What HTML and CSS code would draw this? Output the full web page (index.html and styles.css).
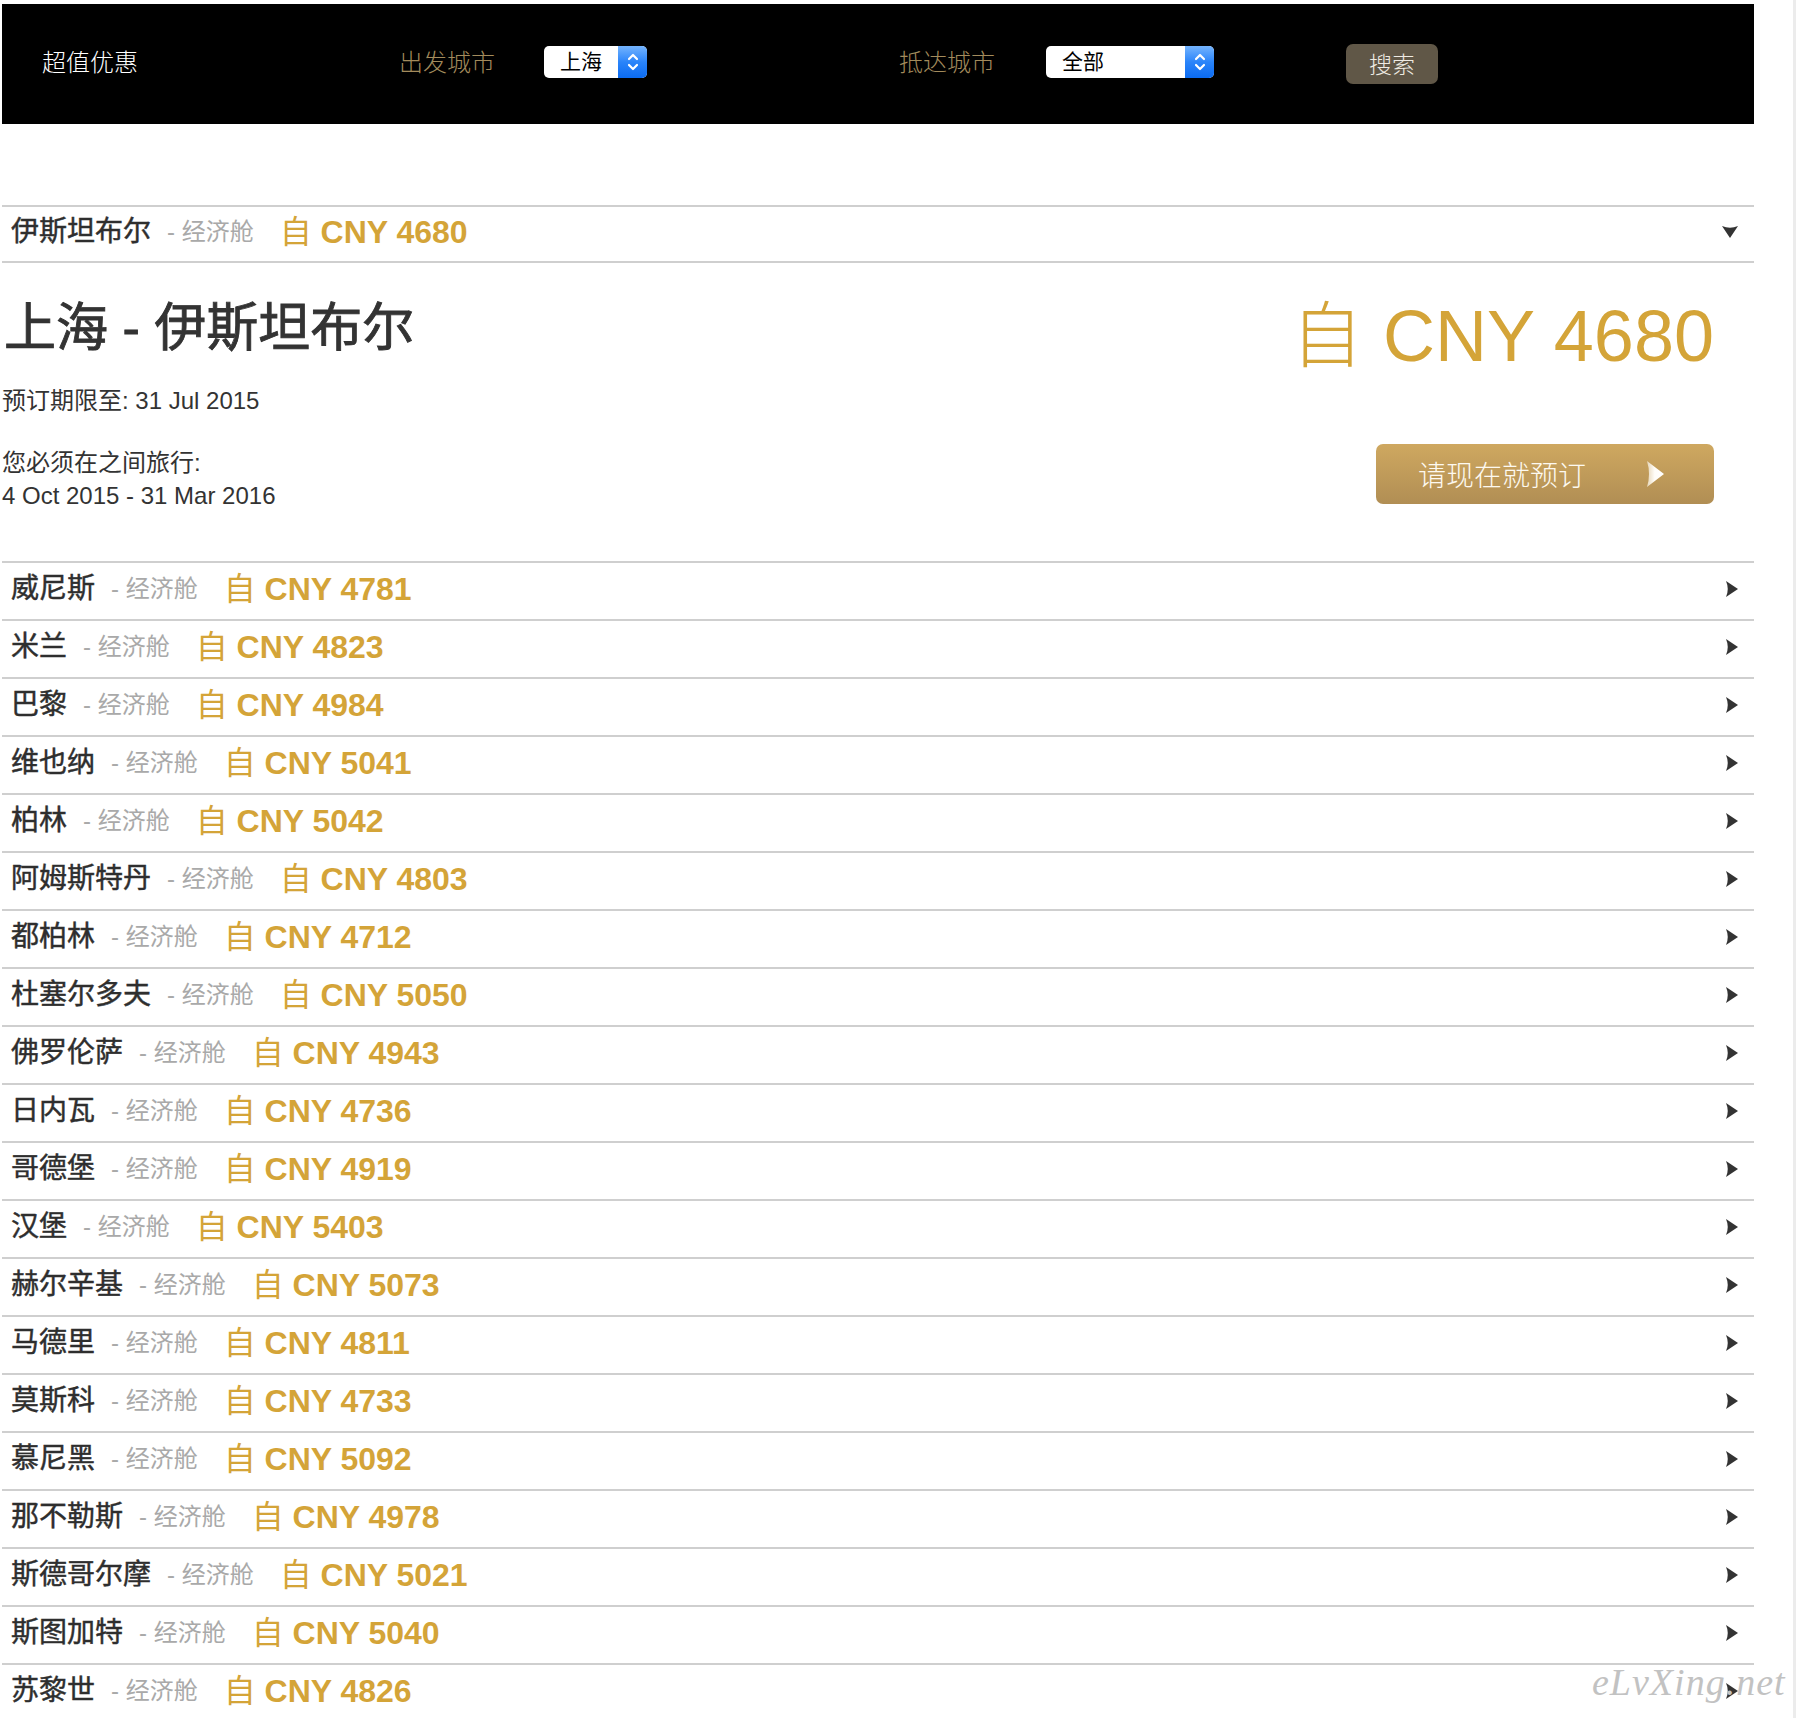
FILE: index.html
```html
<!DOCTYPE html>
<html lang="zh-CN">
<head>
    <meta charset="UTF-8">
    <meta name="viewport" content="width=device-width, initial-scale=1.0">
    <title>超值优惠</title>
    <link rel="stylesheet" href="styles.css">
</head>
<body>
    <div class="page">
        <!-- Pasek wyszukiwania -->
        <header class="topbar">
            <div class="brand">超值优惠</div>
            <div class="field-label">出发城市</div>
            <div class="field">
                <div class="select select-from">
                    <span class="select-value">上海</span>
                    <span class="stepper">
                        <svg width="12" height="20" viewBox="0 0 12 20"><path d="M2 7 L6 3 L10 7 M2 13 L6 17 L10 13" fill="none" stroke="#fff" stroke-width="2.2" stroke-linecap="round" stroke-linejoin="round"/></svg>
                    </span>
                </div>
            </div>
            <div class="field-label">抵达城市</div>
            <div class="field">
                <div class="select select-to">
                    <span class="select-value">全部</span>
                    <span class="stepper">
                        <svg width="12" height="20" viewBox="0 0 12 20"><path d="M2 7 L6 3 L10 7 M2 13 L6 17 L10 13" fill="none" stroke="#fff" stroke-width="2.2" stroke-linecap="round" stroke-linejoin="round"/></svg>
                    </span>
                </div>
            </div>
            <div class="field">
                <button class="search-btn">搜索</button>
            </div>
        </header>

        <section class="deals">
            <div class="deal-row deal-row-open">
                <span class="deal-city">伊斯坦布尔</span>
                <span class="deal-cabin">- 经济舱</span>
                <span class="deal-price"><span class="from">自</span> CNY 4680</span>
                <svg class="deal-arrow" width="16" height="12" viewBox="0 0 16 12"><path d="M0 0 Q8 3.5 16 0 L8 12 Z" fill="#333"/></svg>
            </div>

            <div class="deal-detail">
                <div class="detail-main">
                    <h1 class="route-title">上海 - 伊斯坦布尔</h1>
                    <p class="book-by">预订期限至: 31 Jul 2015</p>
                    <p class="travel-window">您必须在之间旅行:<br>4 Oct 2015 - 31 Mar 2016</p>
                </div>
                <div class="detail-side">
                    <div class="detail-price"><span class="from">自</span> CNY 4680</div>
                    <a href="#" class="book-btn">
                        <span>请现在就预订</span>
                        <svg width="18" height="26" viewBox="0 0 18 26">
                            <defs>
                                <linearGradient id="arrowShade" x1="0" y1="0" x2="1" y2="0">
                                    <stop offset="0" stop-color="#e6d6b8"/>
                                    <stop offset="0.45" stop-color="#fffdf8"/>
                                    <stop offset="1" stop-color="#ffffff"/>
                                </linearGradient>
                            </defs>
                            <path d="M1 0 L18 13 L1 26 Q5 13 1 0 Z" fill="url(#arrowShade)"/>
                        </svg>
                    </a>
                </div>
            </div>

            <div class="deal-row"><span class="deal-city">威尼斯</span><span class="deal-cabin">- 经济舱</span><span class="deal-price"><span class="from">自</span> CNY 4781</span><svg class="deal-arrow" width="12" height="16" viewBox="0 0 12 16"><path d="M0 0 L12 8 L0 16 Q3.5 8 0 0 Z" fill="#333"/></svg></div>
            <div class="deal-row"><span class="deal-city">米兰</span><span class="deal-cabin">- 经济舱</span><span class="deal-price"><span class="from">自</span> CNY 4823</span><svg class="deal-arrow" width="12" height="16" viewBox="0 0 12 16"><path d="M0 0 L12 8 L0 16 Q3.5 8 0 0 Z" fill="#333"/></svg></div>
            <div class="deal-row"><span class="deal-city">巴黎</span><span class="deal-cabin">- 经济舱</span><span class="deal-price"><span class="from">自</span> CNY 4984</span><svg class="deal-arrow" width="12" height="16" viewBox="0 0 12 16"><path d="M0 0 L12 8 L0 16 Q3.5 8 0 0 Z" fill="#333"/></svg></div>
            <div class="deal-row"><span class="deal-city">维也纳</span><span class="deal-cabin">- 经济舱</span><span class="deal-price"><span class="from">自</span> CNY 5041</span><svg class="deal-arrow" width="12" height="16" viewBox="0 0 12 16"><path d="M0 0 L12 8 L0 16 Q3.5 8 0 0 Z" fill="#333"/></svg></div>
            <div class="deal-row"><span class="deal-city">柏林</span><span class="deal-cabin">- 经济舱</span><span class="deal-price"><span class="from">自</span> CNY 5042</span><svg class="deal-arrow" width="12" height="16" viewBox="0 0 12 16"><path d="M0 0 L12 8 L0 16 Q3.5 8 0 0 Z" fill="#333"/></svg></div>
            <div class="deal-row"><span class="deal-city">阿姆斯特丹</span><span class="deal-cabin">- 经济舱</span><span class="deal-price"><span class="from">自</span> CNY 4803</span><svg class="deal-arrow" width="12" height="16" viewBox="0 0 12 16"><path d="M0 0 L12 8 L0 16 Q3.5 8 0 0 Z" fill="#333"/></svg></div>
            <div class="deal-row"><span class="deal-city">都柏林</span><span class="deal-cabin">- 经济舱</span><span class="deal-price"><span class="from">自</span> CNY 4712</span><svg class="deal-arrow" width="12" height="16" viewBox="0 0 12 16"><path d="M0 0 L12 8 L0 16 Q3.5 8 0 0 Z" fill="#333"/></svg></div>
            <div class="deal-row"><span class="deal-city">杜塞尔多夫</span><span class="deal-cabin">- 经济舱</span><span class="deal-price"><span class="from">自</span> CNY 5050</span><svg class="deal-arrow" width="12" height="16" viewBox="0 0 12 16"><path d="M0 0 L12 8 L0 16 Q3.5 8 0 0 Z" fill="#333"/></svg></div>
            <div class="deal-row"><span class="deal-city">佛罗伦萨</span><span class="deal-cabin">- 经济舱</span><span class="deal-price"><span class="from">自</span> CNY 4943</span><svg class="deal-arrow" width="12" height="16" viewBox="0 0 12 16"><path d="M0 0 L12 8 L0 16 Q3.5 8 0 0 Z" fill="#333"/></svg></div>
            <div class="deal-row"><span class="deal-city">日内瓦</span><span class="deal-cabin">- 经济舱</span><span class="deal-price"><span class="from">自</span> CNY 4736</span><svg class="deal-arrow" width="12" height="16" viewBox="0 0 12 16"><path d="M0 0 L12 8 L0 16 Q3.5 8 0 0 Z" fill="#333"/></svg></div>
            <div class="deal-row"><span class="deal-city">哥德堡</span><span class="deal-cabin">- 经济舱</span><span class="deal-price"><span class="from">自</span> CNY 4919</span><svg class="deal-arrow" width="12" height="16" viewBox="0 0 12 16"><path d="M0 0 L12 8 L0 16 Q3.5 8 0 0 Z" fill="#333"/></svg></div>
            <div class="deal-row"><span class="deal-city">汉堡</span><span class="deal-cabin">- 经济舱</span><span class="deal-price"><span class="from">自</span> CNY 5403</span><svg class="deal-arrow" width="12" height="16" viewBox="0 0 12 16"><path d="M0 0 L12 8 L0 16 Q3.5 8 0 0 Z" fill="#333"/></svg></div>
            <div class="deal-row"><span class="deal-city">赫尔辛基</span><span class="deal-cabin">- 经济舱</span><span class="deal-price"><span class="from">自</span> CNY 5073</span><svg class="deal-arrow" width="12" height="16" viewBox="0 0 12 16"><path d="M0 0 L12 8 L0 16 Q3.5 8 0 0 Z" fill="#333"/></svg></div>
            <div class="deal-row"><span class="deal-city">马德里</span><span class="deal-cabin">- 经济舱</span><span class="deal-price"><span class="from">自</span> CNY 4811</span><svg class="deal-arrow" width="12" height="16" viewBox="0 0 12 16"><path d="M0 0 L12 8 L0 16 Q3.5 8 0 0 Z" fill="#333"/></svg></div>
            <div class="deal-row"><span class="deal-city">莫斯科</span><span class="deal-cabin">- 经济舱</span><span class="deal-price"><span class="from">自</span> CNY 4733</span><svg class="deal-arrow" width="12" height="16" viewBox="0 0 12 16"><path d="M0 0 L12 8 L0 16 Q3.5 8 0 0 Z" fill="#333"/></svg></div>
            <div class="deal-row"><span class="deal-city">慕尼黑</span><span class="deal-cabin">- 经济舱</span><span class="deal-price"><span class="from">自</span> CNY 5092</span><svg class="deal-arrow" width="12" height="16" viewBox="0 0 12 16"><path d="M0 0 L12 8 L0 16 Q3.5 8 0 0 Z" fill="#333"/></svg></div>
            <div class="deal-row"><span class="deal-city">那不勒斯</span><span class="deal-cabin">- 经济舱</span><span class="deal-price"><span class="from">自</span> CNY 4978</span><svg class="deal-arrow" width="12" height="16" viewBox="0 0 12 16"><path d="M0 0 L12 8 L0 16 Q3.5 8 0 0 Z" fill="#333"/></svg></div>
            <div class="deal-row"><span class="deal-city">斯德哥尔摩</span><span class="deal-cabin">- 经济舱</span><span class="deal-price"><span class="from">自</span> CNY 5021</span><svg class="deal-arrow" width="12" height="16" viewBox="0 0 12 16"><path d="M0 0 L12 8 L0 16 Q3.5 8 0 0 Z" fill="#333"/></svg></div>
            <div class="deal-row"><span class="deal-city">斯图加特</span><span class="deal-cabin">- 经济舱</span><span class="deal-price"><span class="from">自</span> CNY 5040</span><svg class="deal-arrow" width="12" height="16" viewBox="0 0 12 16"><path d="M0 0 L12 8 L0 16 Q3.5 8 0 0 Z" fill="#333"/></svg></div>
            <div class="deal-row"><span class="deal-city">苏黎世</span><span class="deal-cabin">- 经济舱</span><span class="deal-price"><span class="from">自</span> CNY 4826</span><svg class="deal-arrow" width="12" height="16" viewBox="0 0 12 16"><path d="M0 0 L12 8 L0 16 Q3.5 8 0 0 Z" fill="#333"/></svg></div>
        </section>

        <div class="watermark">eLvXing.net</div>
    </div>
</body>
</html>
```

FILE: styles.css
```css
/* Globalne style */
html {
    overflow: hidden;
    background: linear-gradient(to left, #ececec 0, #ececec 3px, #fff 3px);
}

body {
    margin: 0;
    font-family: "Liberation Sans", "Noto Sans CJK SC", sans-serif;
    color: #333;
}

.page {
    position: relative;
    width: 1752px;
    margin-left: 2px;
    padding-top: 4px;
}

/* Pasek wyszukiwania */
.topbar {
    display: grid;
    grid-template-columns: 357px 145px 355px 147px 300px 92px;
    align-items: center;
    height: 120px;
    padding-left: 40px;
    background: #000;
}

.brand {
    color: #fff;
    font-size: 24px;
    font-weight: 300;
    margin-top: -8px;
}

.field-label {
    color: #a38b5c;
    font-size: 24px;
    font-weight: 300;
    margin-top: -8px;
}

.field {
    display: flex;
    align-items: center;
}

.select {
    display: flex;
    width: 103px;
    height: 32px;
    margin-top: -4px;
    background: #fff;
    border-radius: 5px;
    overflow: hidden;
}

.select-to {
    width: 168px;
}

.select-value {
    flex: 1;
    padding-left: 16px;
    font-size: 21px;
    line-height: 32px;
    color: #000;
}

.stepper {
    display: flex;
    align-items: center;
    justify-content: center;
    width: 29px;
    background: linear-gradient(#74b4fe, #2a84fa 50%, #0b6bf2);
}

.search-btn {
    width: 92px;
    height: 40px;
    border: 0;
    border-radius: 7px;
    background: #605747;
    color: #efebe3;
    font-family: "Noto Sans CJK SC", sans-serif;
    font-size: 23px;
    font-weight: 300;
    line-height: 38px;
    padding: 0 0 2px;
}

/* Lista ofert */
.deals {
    margin-top: 81px;
}

.deal-row {
    display: flex;
    align-items: center;
    height: 46px;
    padding: 0 16px 10px 9px;
    border-top: 2px solid #cfcfcf;
    white-space: nowrap;
}

.deal-row-open {
    height: 44px;
    border-bottom: 2px solid #cfcfcf;
}

.deal-row .deal-arrow {
    margin-bottom: -6px;
}

.deal-city {
    font-size: 28px;
    color: #2e2e2e;
    -webkit-text-stroke: 0.45px #2e2e2e;
}

.deal-cabin {
    margin-left: 16px;
    font-size: 24px;
    color: #a9a9a9;
}

.deal-price {
    margin-left: 26px;
    font-size: 32px;
    font-weight: bold;
    color: #d4a438;
}

.from {
    font-weight: normal;
}

.deal-arrow {
    margin-left: auto;
}

/* Szczegóły oferty */
.deal-detail {
    display: flex;
    justify-content: space-between;
    padding: 33px 40px 49px 0;
}

.route-title {
    margin: 2px 0 0 2px;
    font-size: 52px;
    line-height: 60px;
    font-weight: normal;
    color: #333;
    -webkit-text-stroke: 0.9px #333;
}

.book-by {
    margin: 27px 0 0;
    font-size: 24px;
    line-height: 32px;
}

.travel-window {
    margin: 29px 0 0;
    font-size: 24px;
    line-height: 33px;
}

.detail-side {
    display: flex;
    flex-direction: column;
    align-items: flex-end;
}

.detail-price {
    font-size: 72px;
    line-height: 80px;
    color: #d4a438;
    white-space: nowrap;
}

.detail-price .from {
    font-weight: 300;
}

.book-btn {
    display: flex;
    align-items: center;
    justify-content: space-between;
    box-sizing: border-box;
    width: 338px;
    height: 60px;
    margin-top: 68px;
    padding: 0 50px 0 42px;
    border-radius: 7px;
    background: linear-gradient(#cfa860, #b18e54);
    color: #fdf9f0;
    font-size: 28px;
    font-weight: 300;
    text-decoration: none;
}

/* Znak wodny */
.watermark {
    position: absolute;
    left: 1590px;
    top: 1660px;
    font-family: "Liberation Serif", serif;
    font-style: italic;
    font-size: 38px;
    line-height: 44px;
    color: #c2c2c2;
    letter-spacing: 1px;
}
```
